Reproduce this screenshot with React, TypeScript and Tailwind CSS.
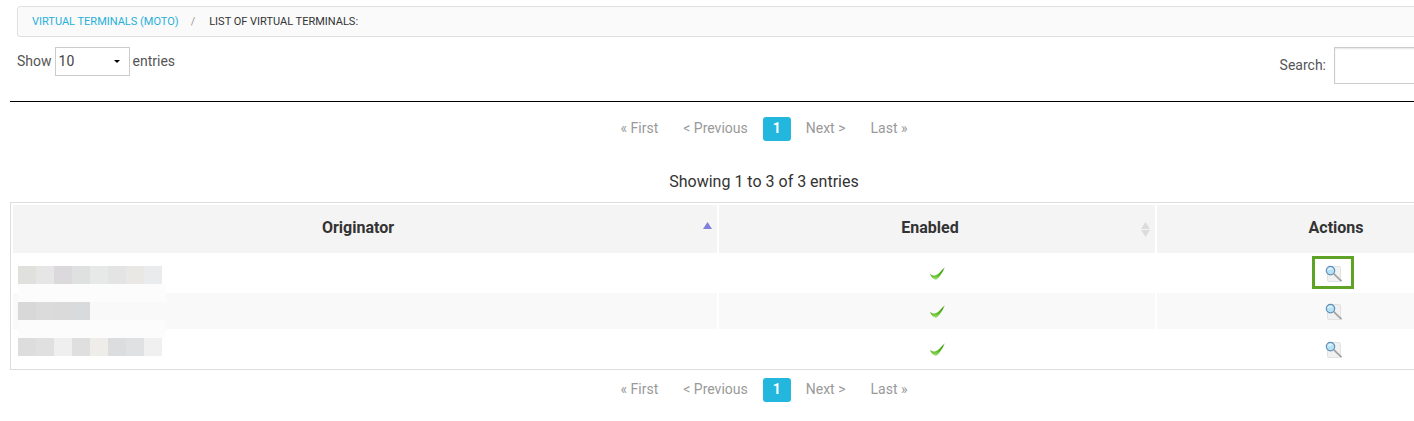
import { useState } from "react";

const rows = [
  { id: 1, highlighted: true },
  { id: 2, highlighted: false },
  { id: 3, highlighted: false },
];

const mosaic = [
  ["bg-[#e0e0dd]", "bg-[#e6e6e6]", "bg-[#dbd9dc]", "bg-[#dfe1e0]", "bg-[#e6e9e8]", "bg-[#e4e4e4]", "bg-[#e9e8e5]", "bg-[#e9ebed]"],
  [],
  ["bg-[#d8d8d8]", "bg-[#dbdbdb]", "bg-[#dadada]", "bg-[#d8dadc]"],
  [],
  ["bg-[#dddddd]", "bg-[#e0e0e0]", "bg-[#efefef]", "bg-[#dfdfdf]", "bg-[#eeedea]", "bg-[#dbdddf]", "bg-[#dfe1e3]", "bg-[#f0f0f0]"],
];

const mosaicRows = ["bg-white", "bg-[#fcfcfc]", "bg-[#f9f9f9]", "bg-[#fcfcfc]", "bg-white"];

function Mosaic() {
  return (
    <div className="absolute left-[5px] top-[11px] z-10 w-[148px]" aria-hidden="true">
      {mosaic.map((blocks, i) => (
        <div key={i} className={`flex h-[18px] ${mosaicRows[i]}`}>
          {blocks.map((color, j) => (
            <span key={j} className={`w-[18px] ${color}`} />
          ))}
        </div>
      ))}
    </div>
  );
}

function CheckIcon() {
  return (
    <svg width="16" height="16" viewBox="0 0 16 16" className="mx-auto block">
      <defs>
        <linearGradient id="check" x1="0" y1="0" x2="0" y2="1">
          <stop offset="0" stopColor="#6fbf45" />
          <stop offset="0.25" stopColor="#3f9e10" />
          <stop offset="0.6" stopColor="#55b81c" />
          <stop offset="1" stopColor="#a5e47c" />
        </linearGradient>
      </defs>
      <path d="M1 7.4C2.6 9.2 4.6 9.9 6.6 9.3C9.6 8.3 12.2 4.6 15.7 1.2C14.4 4.6 11.4 10.6 7.4 13.8C5 13.4 1.6 11 1 7.4Z" fill="url(#check)" />
    </svg>
  );
}

function ViewIcon() {
  return (
    <svg width="18" height="18" viewBox="0 0 18 18" className="block">
      <rect x="2.5" y="1.5" width="13" height="15" rx="1.5" fill="#f1f1f1" stroke="#e2e2e2" />
      <path d="M9.5 9.3L16 15.6" stroke="#999" strokeWidth="1.8" strokeLinecap="round" />
      <path d="M10.2 9.4L15.6 14.6" stroke="#d0d0d0" strokeWidth="0.6" />
      <circle cx="5.5" cy="5.6" r="4.2" fill="#b4e2f7" stroke="#6490b4" strokeWidth="1.2" />
      <path d="M2.6 5.4A3 3 0 0 1 8.2 4.2Q5.6 4 2.6 5.4Z" fill="#e1f4fd" />
    </svg>
  );
}

function Pagination({ label }: { label: string }) {
  const link = "px-2.5 pb-0.5 text-[#999]";
  return (
    <nav aria-label={label} className="flex justify-center gap-[5px] text-sm leading-[22px]">
      <button className={link}>« First</button>
      <button className={link}>&lt; Previous</button>
      <button className="rounded-[3px] bg-[#23b7de] px-2.5 pb-0.5 font-bold text-white" aria-current="page">
        1
      </button>
      <button className={link}>Next &gt;</button>
      <button className={link}>Last »</button>
    </nav>
  );
}

export default function App() {
  const [size, setSize] = useState("10");
  const [search, setSearch] = useState("");

  return (
    <div className="overflow-hidden bg-white font-[Roboto,sans-serif] text-[#333]">
      <main className="-mr-[104px] pb-5 pl-2.5 pt-1.5">
        <nav aria-label="Breadcrumb" className="ml-[7px] flex h-[31px] items-center rounded-[3px] border border-[#e0e0e0] bg-[#fafafa] px-3.5 pt-0.5 text-[11px] uppercase">
          <a href="#terminals" className="text-[#27b0d9]">Virtual Terminals (MOTO)</a>
          <span className="pl-3 pr-3.5 text-[#999]">/</span>
          <span>List of Virtual Terminals:</span>
        </nav>

        <div className="flex items-start justify-between pb-[17px] pl-[7px] pr-1 pt-2.5 text-sm text-[#555]">
          <label className="flex items-center gap-[3px]">
            <span className="pb-0.5">Show</span>
            <span className="relative">
              <select
                value={size}
                onChange={(e) => setSize(e.target.value)}
                className="block h-[29px] w-[75px] appearance-none border border-[#ccc] bg-white px-[3px] pb-0.5 text-[#444]"
              >
                <option>10</option>
                <option>25</option>
                <option>50</option>
                <option>100</option>
              </select>
              <svg width="6" height="3" viewBox="0 0 6 3" className="pointer-events-none absolute right-2.5 top-[13px]">
                <path d="M0 0H6L3 3Z" fill="#000" />
              </svg>
            </span>
            <span className="pb-0.5">entries</span>
          </label>
          <label className="flex items-center gap-2">
            <span className="pb-0.5">Search:</span>
            <input
              type="search"
              value={search}
              onChange={(e) => setSearch(e.target.value)}
              className="h-[37px] w-[180px] border border-[#ccc] px-2 shadow-[inset_0_1px_2px_rgba(0,0,0,0.1)]"
            />
          </label>
        </div>

        <div className="border-t border-black pt-[15px]">
          <Pagination label="Pages above the table" />
        </div>
        <p className="pb-2 pt-[29px] text-center text-base">Showing 1 to 3 of 3 entries</p>

        <table className="w-full table-fixed border-separate border-spacing-0.5 border border-[#ddd]">
          <colgroup>
            <col className="w-[47%]" />
            <col className="w-[436px]" />
            <col />
          </colgroup>
          <thead>
            <tr className="h-12 bg-[#f4f4f4]">
              <th className="p-0 pr-[5px]" aria-sort="ascending">
                <button className="flex w-full items-center font-bold">
                  <span className="flex-1 pb-0.5">Originator</span>
                  <svg width="9" height="15" viewBox="0 0 9 15">
                    <path d="M0 7H9L4.5 0Z" fill="#8080dc" />
                  </svg>
                </button>
              </th>
              <th className="p-0 pr-[5px]">
                <button className="flex w-full items-center font-bold">
                  <span className="flex-1 pb-0.5">Enabled</span>
                  <svg width="9" height="15" viewBox="0 0 9 15">
                    <path d="M0 7H9L4.5 0ZM0 8H9L4.5 15Z" fill="#dcdcdc" />
                  </svg>
                </button>
              </th>
              <th className="p-0 pb-0.5">Actions</th>
            </tr>
          </thead>
          <tbody>
            {rows.map((row, i) => (
              <tr key={row.id} className="h-9 even:bg-[#f9f9f9]">
                <td className="relative p-0">{i === 0 && <Mosaic />}</td>
                <td className="p-0 pt-0.5">
                  <CheckIcon />
                </td>
                <td className="relative p-0 pr-1 pt-0.5">
                  <button className="mx-auto block" aria-label="View terminal">
                    <ViewIcon />
                  </button>
                  {row.highlighted && (
                    <span className="pointer-events-none absolute left-0 right-1.5 top-px mx-auto h-[33px] w-[42px] border-3 border-[#5ea226]" />
                  )}
                </td>
              </tr>
            ))}
          </tbody>
        </table>

        <div className="pt-2">
          <Pagination label="Pages below the table" />
        </div>
      </main>
    </div>
  );
}
